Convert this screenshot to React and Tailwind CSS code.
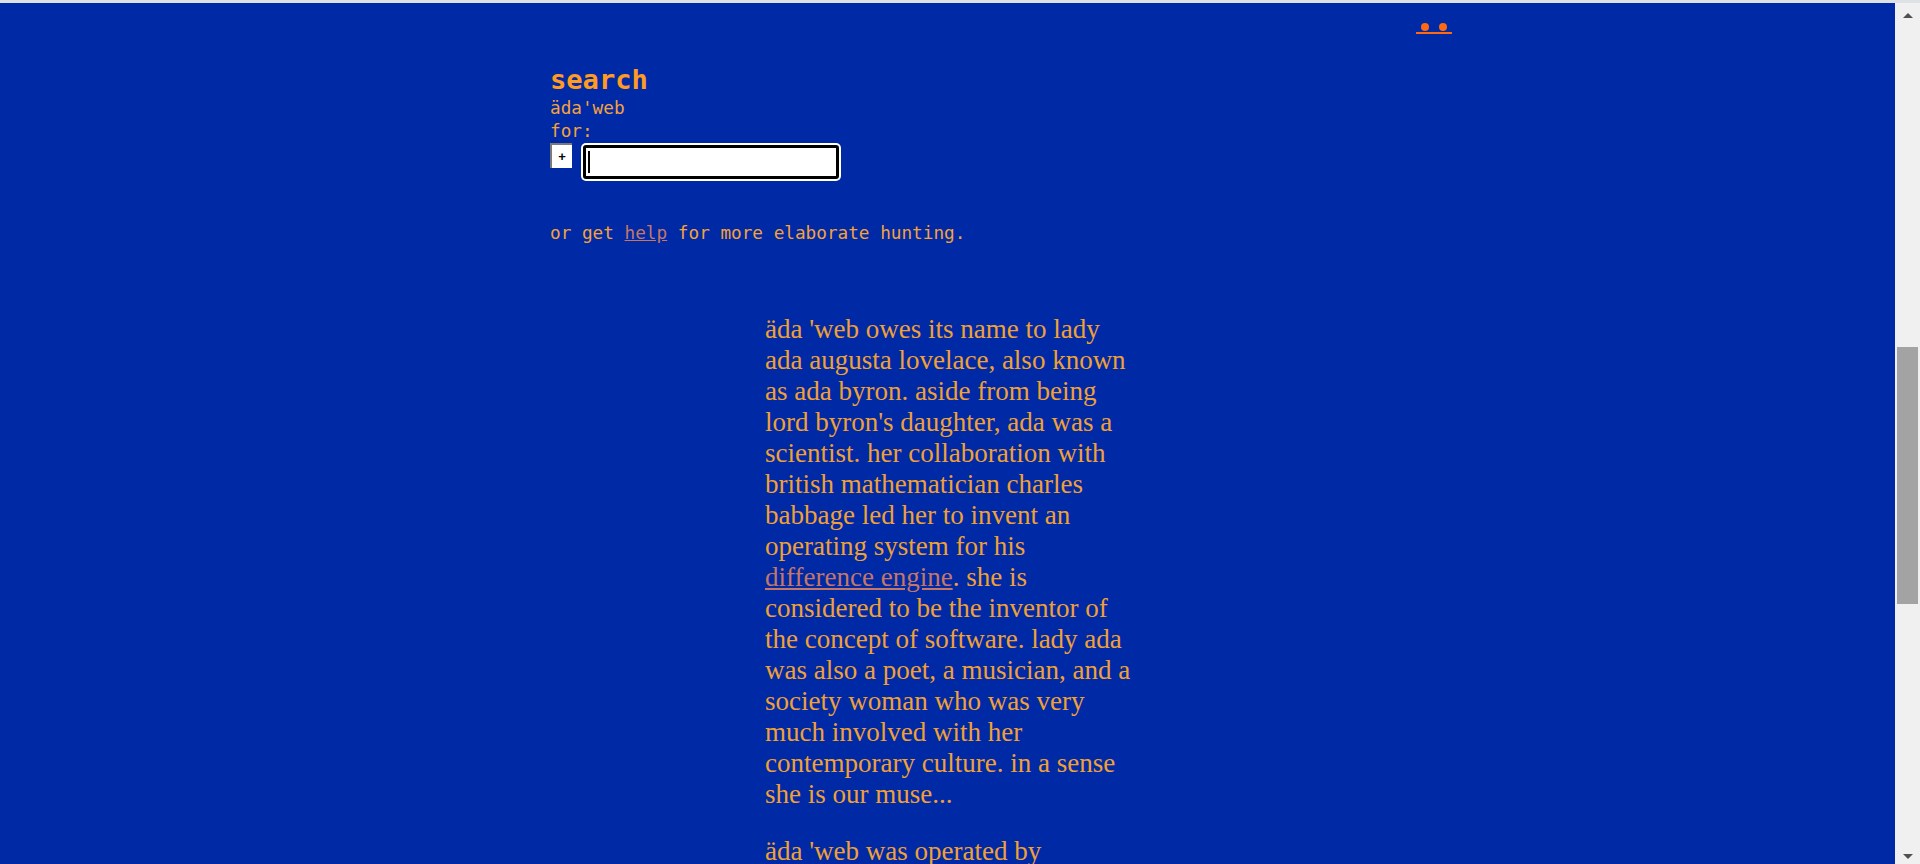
import React from "react";

const mono = { fontFamily: '"DejaVu Sans Mono", "Liberation Mono", monospace' };

const lines1 = [
  "äda 'web owes its name to lady",
  "ada augusta lovelace, also known",
  "as ada byron. aside from being",
  "lord byron's daughter, ada was a",
  "scientist. her collaboration with",
  "british mathematician charles",
  "babbage led her to invent an",
  "operating system for his",
];
const lines2 = [
  "considered to be the inventor of",
  "the concept of software. lady ada",
  "was also a poet, a musician, and a",
  "society woman who was very",
  "much involved with her",
  "contemporary culture. in a sense",
  "she is our muse...",
];

export default function App() {
  return (
    <div className="h-[864px] w-[1920px] overflow-hidden flex flex-col bg-[#0029a6]">
      <div className="h-[3px] shrink-0 bg-[#dee1e6]" />
      <div className="flex flex-1 min-h-0">
        <main className="flex-1 overflow-hidden">
          <div className="ml-[550px] w-[902px] pt-[19.7px]">
            <div className="flex justify-end">
              <a
                href="#"
                className="flex items-center gap-[10px] px-[5px] pb-[1px] border-b-2 border-[#ff6a10]"
              >
                <span className="block w-[8px] h-[8px] rounded-full bg-[#ff6a10]" />
                <span className="block w-[8px] h-[8px] rounded-full bg-[#ff6a10]" />
              </a>
            </div>

            <h1
              className="mt-[29.6px] text-[27.1px] leading-[34px] font-bold text-[#ff9a22]"
              style={mono}
            >
              search
            </h1>
            <div className="text-[17.7px] leading-[22.7px] text-[#f4a23a]" style={mono}>
              <div>äda'web</div>
              <div>for:</div>
            </div>

            <div className="flex items-start gap-[9px] h-[38px]">
              <div className="w-[22px] h-[25px] bg-white border-l-2 border-t-2 border-[#7a7a7a] flex items-center justify-center">
                <span
                  className="text-[13px] leading-none text-black font-bold"
                  style={{ fontFamily: '"Liberation Sans", Arial, sans-serif' }}
                >
                  +
                </span>
              </div>
              <div className="w-[260px] h-[38px] bg-white rounded-[5px] p-[2px]">
                <div className="h-full w-full border-[3px] border-black rounded-[3px] bg-white flex items-center pl-[2px]">
                  <span className="block w-[2px] h-[22px] bg-black" />
                </div>
              </div>
            </div>

            <p
              className="mt-[41.6px] text-[17.7px] leading-[22.7px] text-[#f4a23a] whitespace-nowrap"
              style={mono}
            >
              or get{" "}
              <a href="#" className="underline text-[#c57766]">
                help
              </a>{" "}
              for more elaborate hunting.
            </p>

            <div
              className="mt-[69.4px] ml-[215px] w-[375px] text-[27px] leading-[31px] text-[#f0a035] whitespace-nowrap"
              style={{ fontFamily: '"Liberation Serif", "Times New Roman", serif' }}
            >
              <p>
                {lines1.map((l, i) => (
                  <React.Fragment key={i}>
                    {l}
                    <br />
                  </React.Fragment>
                ))}
                <a href="#" className="underline text-[#c57766]">
                  difference engine
                </a>
                . she is
                <br />
                {lines2.map((l, i) => (
                  <React.Fragment key={i}>
                    {l}
                    {i < lines2.length - 1 && <br />}
                  </React.Fragment>
                ))}
              </p>
              <p className="mt-[25.3px]">äda 'web was operated by</p>
            </div>
          </div>
        </main>

        <div className="w-[25px] shrink-0 bg-[#f0f0f0] flex flex-col">
          <div className="h-[25px] flex items-start justify-center pt-[10px]">
            <svg width="10" height="5" viewBox="0 0 10 5">
              <path d="M0 5 L5 0 L10 5 Z" fill="#505050" />
            </svg>
          </div>
          <div className="flex-1">
            <div className="mt-[319px] mx-[2px] h-[257px] bg-[#a3a3a3]" />
          </div>
          <div className="h-[25px] flex items-end justify-center pb-[5px]">
            <svg width="10" height="5" viewBox="0 0 10 5">
              <path d="M0 0 L10 0 L5 5 Z" fill="#505050" />
            </svg>
          </div>
        </div>
      </div>
    </div>
  );
}
